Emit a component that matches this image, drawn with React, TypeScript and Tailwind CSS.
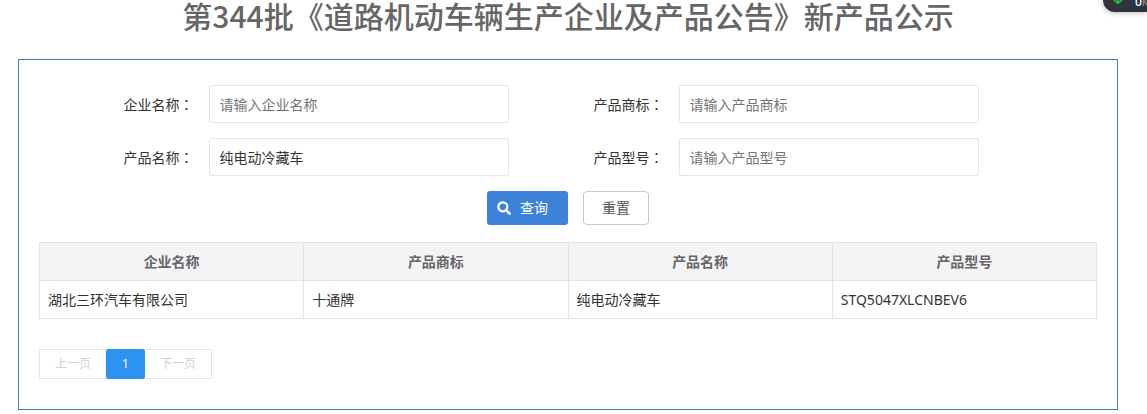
import React from 'react';

type Field = {
  id: string;
  label: string;
  placeholder: string;
  value?: string;
};

const fields: Field[] = [
  { id: 'company', label: '企业名称', placeholder: '请输入企业名称' },
  { id: 'brand', label: '产品商标', placeholder: '请输入产品商标' },
  { id: 'product', label: '产品名称', placeholder: '请输入产品名称', value: '纯电动冷藏车' },
  { id: 'model', label: '产品型号', placeholder: '请输入产品型号' },
];

const columns = ['企业名称', '产品商标', '产品名称', '产品型号'];

const rows = [['湖北三环汽车有限公司', '十通牌', '纯电动冷藏车', 'STQ5047XLCNBEV6']];

const SearchField = ({ id, label, placeholder, value }: Field) => (
  <div className="flex items-center">
    <label htmlFor={id} className="w-[85px] shrink-0 whitespace-nowrap">
      {label}
      {/* the TC face centres the colon in its box */}
      <span className="font-['Noto_Sans_CJK_TC',sans-serif]">：</span>
    </label>
    <input
      id={id}
      type="text"
      placeholder={placeholder}
      defaultValue={value}
      className="h-[38px] w-[300px] rounded-xs border border-[#e6e6e6] bg-white pl-2.5 text-[#333] outline-none placeholder:text-[#757575]"
    />
  </div>
);

const SearchIcon = () => (
  <svg viewBox="0 0 14 14" className="size-3.5" fill="none" stroke="currentColor" aria-hidden="true">
    <circle cx="5.8" cy="5.8" r="4.5" strokeWidth="2.2" />
    <path d="M9.2 9.2 L12.6 12.6" strokeWidth="2.6" strokeLinecap="round" />
  </svg>
);

// Network speed widget hanging off the corner of the window
const SpeedWidget = () => (
  <div className="absolute top-0 right-0 h-3 w-11 overflow-hidden rounded-bl-[20px] bg-[#2f343c] shadow-[0_0_6px_rgba(0,0,0,0.35)]">
    <svg viewBox="0 0 10 6" className="absolute top-0 left-2.5 h-1.5 w-2.5" fill="none" stroke="#27b83b" aria-hidden="true">
      <path d="M1 0 L5 3 L9 0 M5 0 V2.5" strokeWidth="1.8" />
    </svg>
    <span className="absolute -top-1 left-8 text-xs leading-3 font-medium whitespace-nowrap text-white">
      0<span className="text-[10px] font-normal text-[#999]">K/s</span>
    </span>
  </div>
);

const App = () => {
  return (
    <div className="relative bg-white pr-[29px] pb-1 pl-[18px] font-['Noto_Sans','Noto_Sans_CJK_SC',sans-serif] text-sm text-[#333]">
      <SpeedWidget />

      <h1 className="pb-7 text-center font-['Noto_Sans_CJK_SC',sans-serif] text-[30px] leading-[31px] font-medium whitespace-nowrap text-[#666]">
        第344批《道路机动车辆生产企业及产品公告》新产品公示
      </h1>

      <main className="border border-[#4c7aaf] px-5 pt-[25px] pb-[30px]">
        <form onSubmit={(e) => e.preventDefault()}>
          <div className="flex justify-center">
            <div className="grid grid-cols-[385px_385px] gap-x-[85px] gap-y-[15px] pr-[34px]">
              {fields.map((field) => (
                <SearchField key={field.id} {...field} />
              ))}
            </div>
          </div>

          <div className="mt-[15px] flex justify-center gap-[15px]">
            <button type="submit" className="flex h-[34px] w-[81px] items-center gap-[9px] rounded-[3px] bg-[#3b82d8] pl-2.5 text-white">
              <SearchIcon />
              查询
            </button>
            <button type="reset" className="h-[34px] w-[66px] rounded border border-[#c9c9c9] bg-white text-[#555]">
              重置
            </button>
          </div>
        </form>

        <table className="mt-[17px] w-full table-fixed border-collapse">
          <thead>
            <tr className="h-[38px] bg-[#f4f4f7] text-[#666]">
              {columns.map((column) => (
                <th key={column} className="border border-[#e4e4e6] font-bold">
                  {column}
                </th>
              ))}
            </tr>
          </thead>
          <tbody>
            {rows.map((row, index) => (
              <tr key={index} className="h-[38px]">
                {row.map((cell) => (
                  <td key={cell} className="border border-[#e4e4e6] px-2">
                    {cell}
                  </td>
                ))}
              </tr>
            ))}
          </tbody>
        </table>

        <nav className="mt-[30px] flex text-xs">
          <button type="button" disabled className="h-[30px] w-[67px] rounded-l-xs border border-r-0 border-[#e2e2e2] text-[#d2d2d2]">
            上一页
          </button>
          <button type="button" aria-current="page" className="h-[30px] w-[39px] rounded-xs bg-[#2d93f0] text-white">
            1
          </button>
          <button type="button" disabled className="h-[30px] w-[67px] rounded-r-xs border border-l-0 border-[#e2e2e2] text-[#d2d2d2]">
            下一页
          </button>
        </nav>
      </main>
    </div>
  );
};

export default App;
